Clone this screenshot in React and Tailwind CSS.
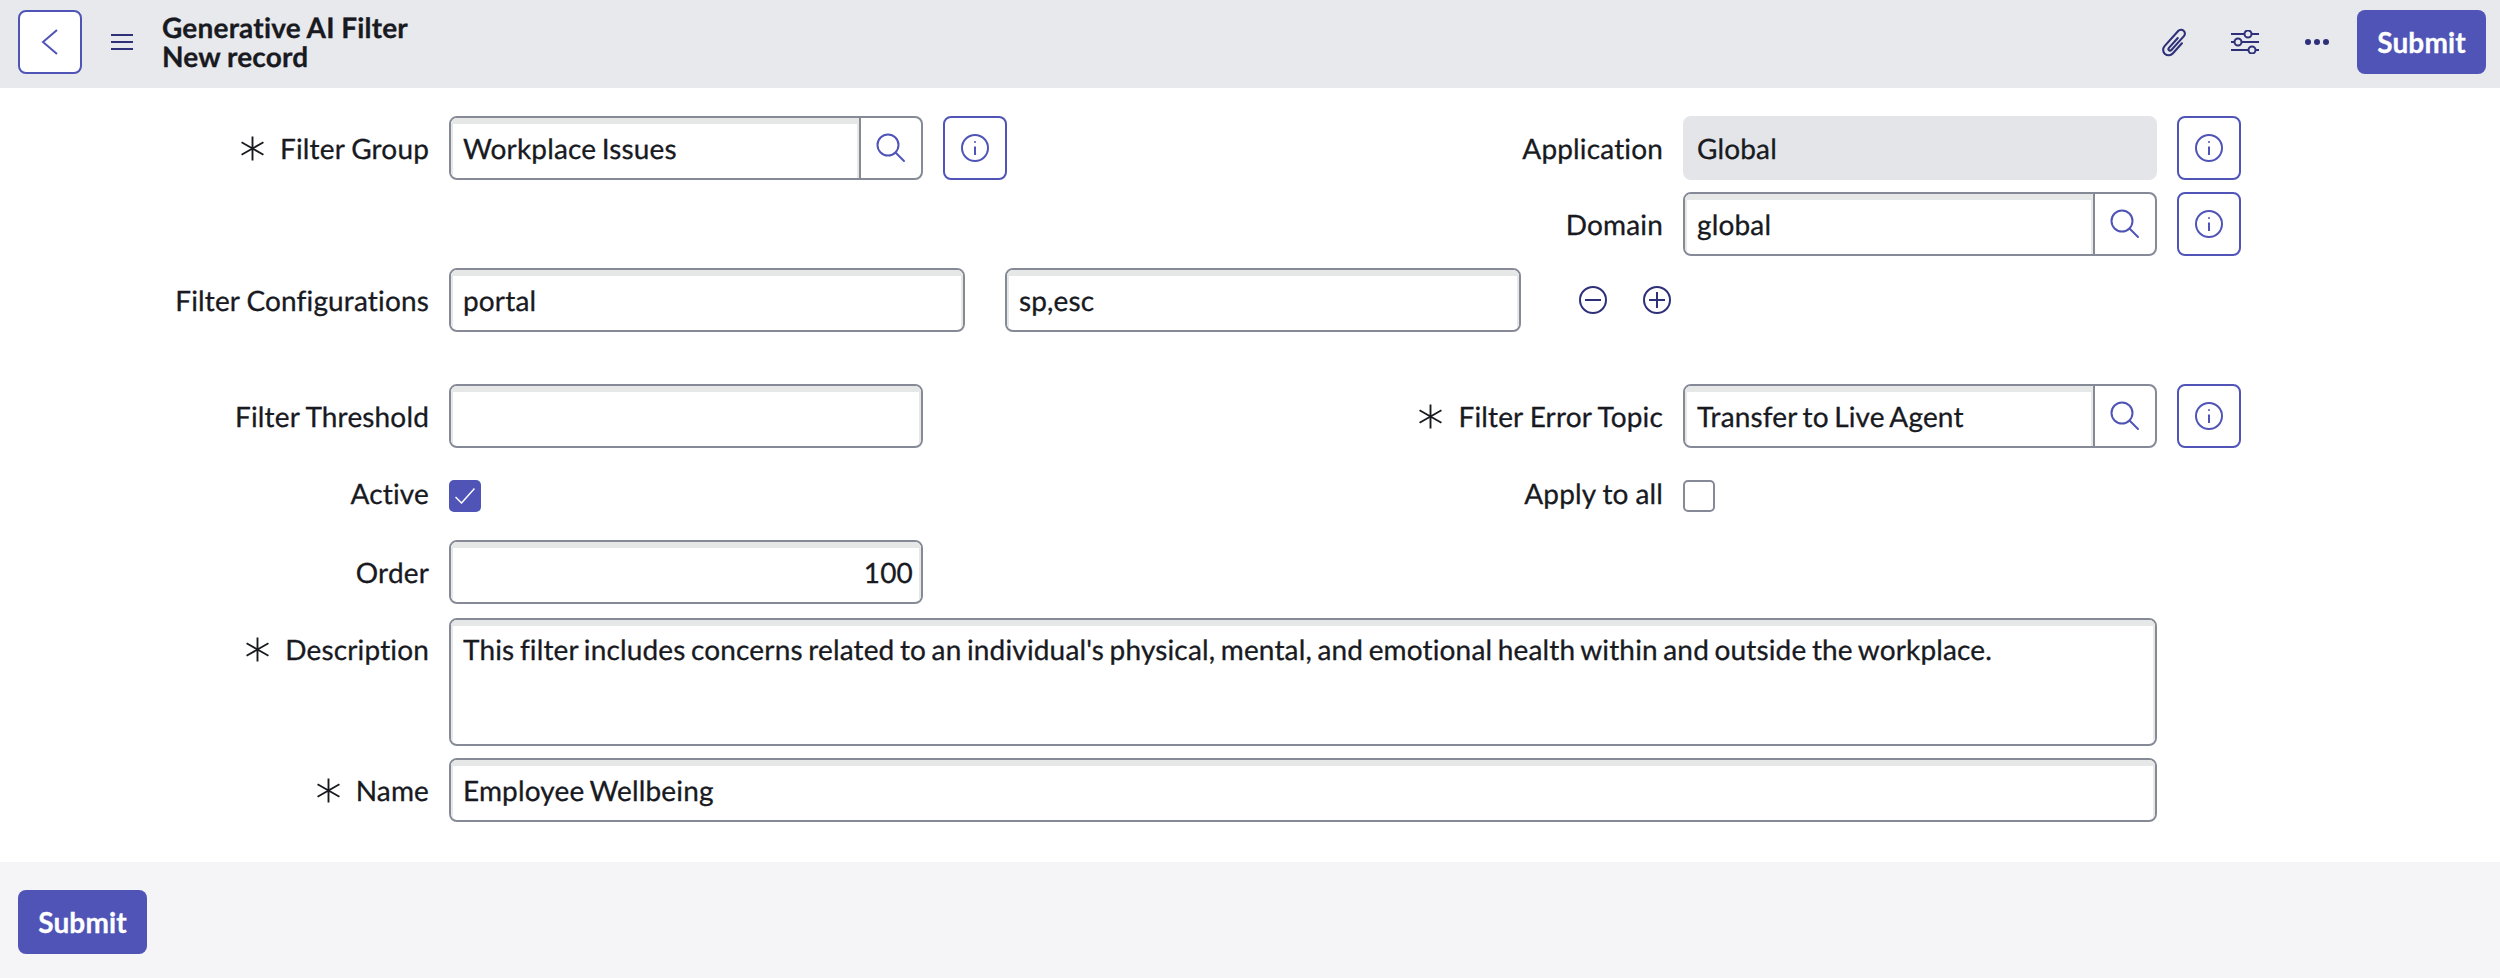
import { useState } from "react";

const Star = () => (
  <svg width="25" height="25" viewBox="0 0 24 24" className="shrink-0 text-[#181a1f]" fill="none" stroke="currentColor" strokeWidth="1.8">
    <path d="M12 0.5V23.5M1.5 6L22.5 18M22.5 6L1.5 18" />
  </svg>
);

const SearchIcon = () => (
  <svg width="32" height="32" viewBox="0 0 32 32" fill="none" stroke="#4f54b6" strokeWidth="2">
    <circle cx="13" cy="13" r="10.5" />
    <path d="M20.5 20.5L29 29" strokeLinecap="round" />
  </svg>
);

const InfoIcon = () => (
  <svg width="28" height="28" viewBox="0 0 28 28" fill="none" stroke="#4f54b6" strokeWidth="2">
    <circle cx="14" cy="14" r="13" />
    <path d="M14 12.5V21" />
    <circle cx="14" cy="8" r="1" fill="#4f54b6" stroke="none" />
  </svg>
);

const InfoButton = () => (
  <button className="w-16 h-16 shrink-0 rounded-lg border-2 border-[#4f54b6] bg-white flex items-center justify-center">
    <InfoIcon />
  </button>
);

const Label = ({ text, required, className = "" }) => (
  <div className={"flex items-center justify-end gap-[15px] pr-5 w-[449px] shrink-0 [word-spacing:-0.5px] " + className}>
    {required && <Star />}
    <span>{text}</span>
  </div>
);

const TextBox = ({ value, search, width = "w-full", height = "h-16", right, top }) => (
  <div className={"flex rounded-lg border-2 border-[#858a96] bg-white overflow-hidden " + width + " " + height}>
    <div
      className={
        "flex-1 min-w-0 shadow-[inset_2px_6px_0_#e6e8e8,inset_-2px_6px_0_#e6e8e8] flex " +
        (top ? "items-start pt-[8px]" : "items-center") +
        (right ? " justify-end px-2" : " px-3")
      }
    >
      {value}
    </div>
    {search && (
      <div className="w-[62px] shrink-0 border-l-2 border-[#858a96] flex items-center justify-center">
        <SearchIcon />
      </div>
    )}
  </div>
);

const Half = ({ children }) => <div className="w-[1234px] shrink-0 flex">{children}</div>;

const SubmitButton = () => (
  <button className="w-[129px] h-16 rounded-lg bg-[#4f54b6] text-white font-bold">Submit</button>
);

export default function App() {
  const [active, setActive] = useState(true);

  return (
    <div className="w-[2500px] h-[978px] flex flex-col bg-white text-[#181a1f] text-[28px] font-['Lato',sans-serif] [text-rendering:geometricPrecision] tracking-[0.15px] [word-spacing:-1.8px] [-webkit-text-stroke:0.3px_currentColor] overflow-hidden">
      <header className="h-[88px] shrink-0 bg-[#e8e9ed] flex items-center pl-[18px] pr-[14px] pb-1">
        <button className="w-16 h-16 rounded-lg border-2 border-[#4f54b6] bg-white flex items-center justify-center">
          <svg width="24" height="32" viewBox="0 0 24 32" fill="none" stroke="#4f54b6" strokeWidth="2">
            <path d="M19 4L5 16L19 28" />
          </svg>
        </button>
        <svg className="ml-[29px]" width="22" height="16" viewBox="0 0 22 16" stroke="#2e3079" strokeWidth="2">
          <path d="M0 1H22M0 8H22M0 15H22" />
        </svg>
        <div className="ml-[29px] font-bold leading-[29px] tracking-[0.2px] [word-spacing:-0.5px] text-[#181a1f]">
          <div>Generative AI Filter</div>
          <div>New record</div>
        </div>
        <div className="ml-auto flex items-center">
          <svg width="33" height="33" viewBox="-15 -15 30 30" fill="none" stroke="#2e3079" strokeWidth="1.9" strokeLinecap="round">
            <path transform="rotate(42)" d="M5.5 -4V8.5A5 5 0 0 1 -4.5 8.5V-10A3.5 3.5 0 0 1 2.5 -10V7A1.5 1.5 0 0 1 -0.5 7V-5" />
          </svg>
          <svg className="ml-[40px]" width="28" height="24" viewBox="0 0 28 24" fill="none" stroke="#2e3079" strokeWidth="2">
            <path d="M0 4H13.5M20.5 4H28M0 12H3.5M10.5 12H28M0 20H17.5M24.5 20H28" />
            <circle cx="17" cy="4" r="3.5" />
            <circle cx="7" cy="12" r="3.5" />
            <circle cx="21" cy="20" r="3.5" />
          </svg>
          <svg className="ml-[46px]" width="24" height="6" viewBox="0 0 24 6" fill="#2e3079">
            <circle cx="3" cy="3" r="3" />
            <circle cx="12" cy="3" r="3" />
            <circle cx="21" cy="3" r="3" />
          </svg>
          <div className="ml-[28px]">
            <SubmitButton />
          </div>
        </div>
      </header>

      <main className="flex-1 flex flex-col pt-7">
        <div className="flex">
          <Half>
            <Label text="Filter Group" required className="h-16" />
            <TextBox value="Workplace Issues" search width="w-[474px]" />
            <div className="ml-5">
              <InfoButton />
            </div>
          </Half>
          <div className="flex flex-col gap-3">
            <div className="flex">
              <Label text="Application" className="h-16" />
              <div className="w-[474px] h-16 rounded-lg bg-[#e4e5e9] flex items-center px-[14px]">Global</div>
              <div className="ml-5">
                <InfoButton />
              </div>
            </div>
            <div className="flex">
              <Label text="Domain" className="h-16" />
              <TextBox value="global" search width="w-[474px]" />
              <div className="ml-5">
                <InfoButton />
              </div>
            </div>
          </div>
        </div>

        <div className="flex mt-3">
          <Label text="Filter Configurations" className="h-16" />
          <TextBox value="portal" width="w-[516px]" />
          <div className="ml-10">
            <TextBox value="sp,esc" width="w-[516px]" />
          </div>
          <div className="ml-[58px] flex items-center gap-[36px]">
            <svg width="28" height="28" viewBox="0 0 28 28" fill="none" stroke="#2e3079" strokeWidth="2">
              <circle cx="14" cy="14" r="13" />
              <path d="M6 14H22" />
            </svg>
            <svg width="28" height="28" viewBox="0 0 28 28" fill="none" stroke="#2e3079" strokeWidth="2">
              <circle cx="14" cy="14" r="13" />
              <path d="M6 14H22M14 6V22" />
            </svg>
          </div>
        </div>

        <div className="flex mt-[52px]">
          <Half>
            <Label text="Filter Threshold" className="h-16" />
            <TextBox value="" width="w-[474px]" />
          </Half>
          <Label text="Filter Error Topic" required className="h-16" />
          <TextBox value="Transfer to Live Agent" search width="w-[474px]" />
          <div className="ml-5">
            <InfoButton />
          </div>
        </div>

        <div className="flex mt-8">
          <Half>
            <Label text="Active" className="h-[26px]" />
            <button
              onClick={() => setActive(!active)}
              className="w-8 h-8 rounded-[5px] bg-[#4f54b6] flex items-center justify-center"
            >
              {active && (
                <svg width="20" height="16" viewBox="0 0 20 16" fill="none" stroke="white" strokeWidth="1.5">
                  <path d="M0.5 9L6.5 15L19.5 0.5" />
                </svg>
              )}
            </button>
          </Half>
          <Label text="Apply to all" className="h-[26px]" />
          <div className="w-8 h-8 rounded-[5px] border-2 border-[#858a96] bg-white" />
        </div>

        <div className="flex mt-7">
          <Label text="Order" className="h-16" />
          <TextBox value="100" right width="w-[474px]" />
        </div>

        <div className="flex mt-[14px]">
          <Label text="Description" required className="h-[62px]" />
          <TextBox
            value="This filter includes concerns related to an individual's physical, mental, and emotional health within and outside the workplace."
            top
            width="w-[1708px]"
            height="h-[128px]"
          />
        </div>

        <div className="flex mt-3">
          <Label text="Name" required className="h-16" />
          <TextBox value="Employee Wellbeing" width="w-[1708px]" />
        </div>
      </main>

      <footer className="h-[116px] shrink-0 bg-[#f5f5f8] pt-7 pl-[18px]">
        <SubmitButton />
      </footer>
    </div>
  );
}
